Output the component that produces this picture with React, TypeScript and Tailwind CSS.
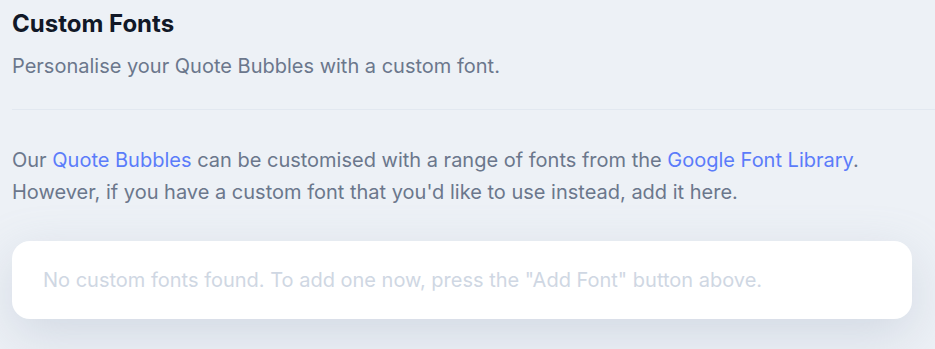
import React from "react";

export default function App() {
  return (
    <div
      className="w-[935px] h-[349px] overflow-hidden bg-[#edf1f6]"
      style={{ fontFamily: "Inter, 'Noto Sans', sans-serif" }}
    >
      <div className="pl-3 pt-[8px]">
        <h1 className="text-[24px] leading-[32px] font-bold text-[#111827]">Custom Fonts</h1>
        <p className="mt-[12px] text-[20px] leading-[28px] text-[#6b778c]">
          Personalise your Quote Bubbles with a custom font.
        </p>
        <div className="mt-[29px] h-px bg-[#e2e8f0]" />
        <div className="mt-[34px] text-[20px] leading-[32px] text-[#6b778c]">
          <p>
            Our <span className="text-[#5b7cfa]">Quote Bubbles</span> can be customised with a range of fonts from the{" "}
            <span className="text-[#5b7cfa]">Google Font Library</span>.
          </p>
          <p>However, if you have a custom font that you'd like to use instead, add it here.</p>
        </div>
        <div className="mt-[33px] w-[900px] h-[78px] rounded-[18px] bg-white shadow-[0_16px_50px_rgba(148,163,184,0.3)] flex items-center px-[31px]">
          <p className="text-[20px] text-[#cfd7e3]">
            No custom fonts found. To add one now, press the "Add Font" button above.
          </p>
        </div>
      </div>
    </div>
  );
}
